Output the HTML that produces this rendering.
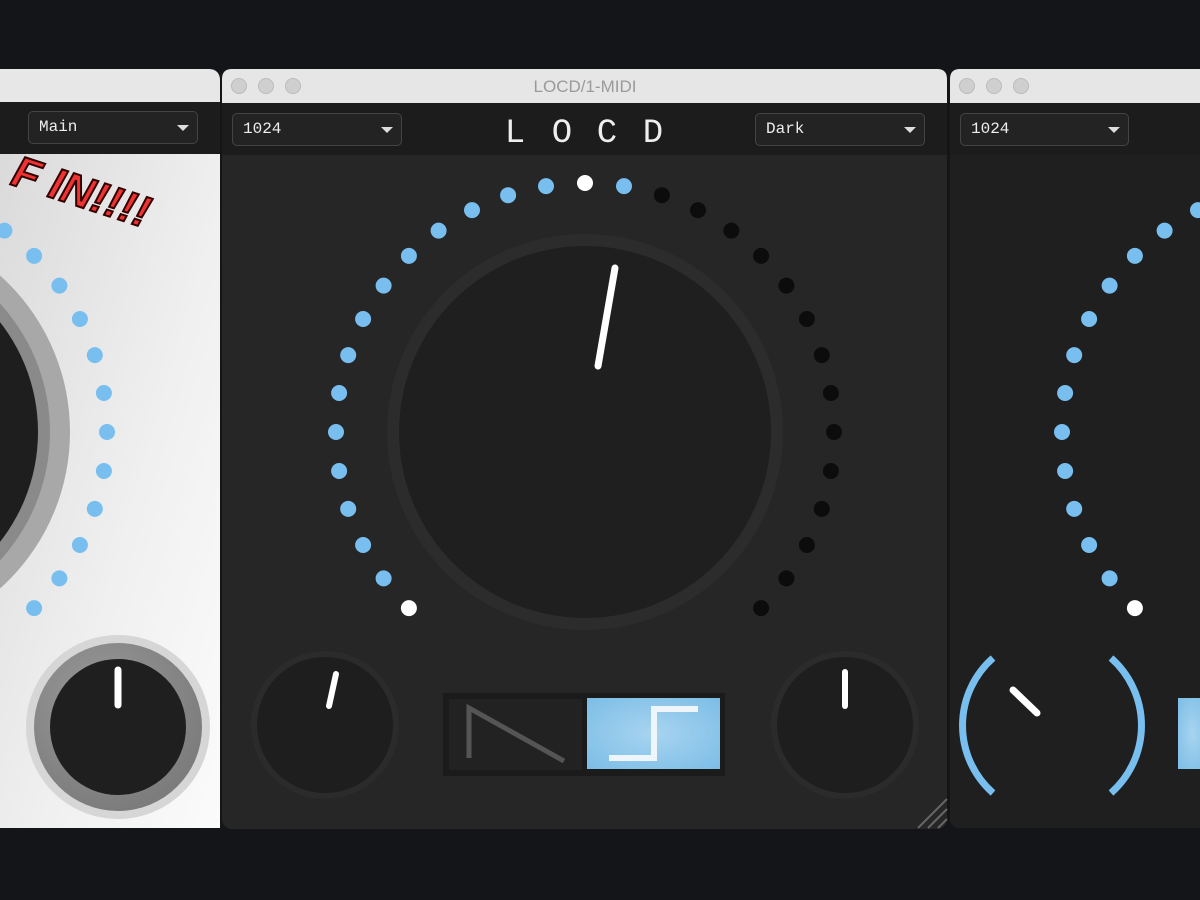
<!DOCTYPE html><html><head><style>
body{margin:0;width:1200px;height:900px;overflow:hidden;background:#141518;font-family:"Liberation Mono",monospace}
.dd{position:absolute;height:33px;border:1px solid #444;border-radius:5px;background:#232323;color:#eee;font-size:16px;line-height:31px;padding-left:10px;box-sizing:border-box}
.dd:after{content:"";position:absolute;right:8px;top:13px;border:6px solid transparent;border-top:6px solid #ddd;border-bottom:0}
</style></head><body>
<svg width="1200" height="900" style="position:absolute;left:0;top:0">
<defs>
<linearGradient id="lg" x1="0" y1="0" x2="1" y2="1"><stop offset="0" stop-color="#d8d8d8"/><stop offset=".6" stop-color="#f0f0f0"/><stop offset="1" stop-color="#fbfbfb"/></linearGradient>
<radialGradient id="bl" cx=".5" cy=".5" r=".7"><stop offset="0" stop-color="#a8d4f0"/><stop offset="1" stop-color="#7cbde6"/></radialGradient>
<radialGradient id="kr" cx=".4" cy=".35" r=".7"><stop offset="0" stop-color="#9a9a9a"/><stop offset="1" stop-color="#7a7a7a"/></radialGradient>
</defs>
<!-- left window -->
<path d="M0 69 H208 Q220 69 220 81 V828 H0Z" fill="url(#lg)"/>
<path d="M0 69 H208 Q220 69 220 81 V102 H0Z" fill="#e7e7e7"/>
<rect x="0" y="102" width="220" height="52" fill="#1c1c1c"/>
<circle cx="-140" cy="432" r="210" fill="#a8a8a8"/>
<circle cx="-140" cy="432" r="190" fill="#8a8a8a"/>
<circle cx="-140" cy="432" r="178" fill="#1e1e1e"/>
<circle cx="118" cy="727" r="92" fill="#d6d6d6"/>
<circle cx="118" cy="727" r="84" fill="url(#kr)"/>
<circle cx="118" cy="727" r="68" fill="#1f1f1f"/>
<line x1="118" y1="705" x2="118" y2="670" stroke="#fff" stroke-width="7" stroke-linecap="round"/>
<text x="10" y="200" transform="rotate(18 60 190)" font-family="Liberation Sans" font-weight="bold" font-style="italic" font-size="44" fill="#e33" stroke="#300" stroke-width="2">F IN!!!!</text>
<!-- center window -->
<rect x="222" y="69" width="725" height="760" rx="10" fill="#262626"/>
<path d="M222 103 V79 Q222 69 232 69 H937 Q947 69 947 79 V103Z" fill="#e6e6e6"/>
<rect x="222" y="103" width="725" height="52" fill="#1c1c1c"/>
<circle cx="239" cy="86" r="7.5" fill="#cfcfcf" stroke="#bbb"/><circle cx="266" cy="86" r="7.5" fill="#cfcfcf" stroke="#bbb"/><circle cx="293" cy="86" r="7.5" fill="#cfcfcf" stroke="#bbb"/>
<text x="585" y="92" text-anchor="middle" font-family="Liberation Sans" font-size="17" fill="#9a9a9a">LOCD/1-MIDI</text>
<text x="515" y="142" text-anchor="middle" font-size="34" fill="#eee">L</text>
<text x="562" y="142" text-anchor="middle" font-size="34" fill="#eee">O</text>
<text x="607" y="142" text-anchor="middle" font-size="34" fill="#eee">C</text>
<text x="653" y="142" text-anchor="middle" font-size="34" fill="#eee">D</text>
<circle cx="585" cy="432" r="198" fill="#2c2c2c"/>
<circle cx="585" cy="432" r="186" fill="#1f1f1f"/>
<line x1="598" y1="366" x2="615" y2="268" stroke="#fff" stroke-width="7" stroke-linecap="round"/>
<circle cx="325" cy="725" r="74" fill="#2b2b2b"/><circle cx="325" cy="725" r="68" fill="#1e1e1e"/>
<line x1="329" y1="706" x2="336" y2="674" stroke="#fff" stroke-width="6" stroke-linecap="round"/>
<circle cx="845" cy="725" r="74" fill="#2b2b2b"/><circle cx="845" cy="725" r="68" fill="#1e1e1e"/>
<line x1="845" y1="706" x2="845" y2="672" stroke="#fff" stroke-width="6" stroke-linecap="round"/>
<rect x="443" y="693" width="282" height="83" fill="#1b1b1b"/>
<rect x="449" y="699" width="133" height="71" fill="#222"/>
<path d="M469 758 V708 L564 761" stroke="#555" stroke-width="5" fill="none"/>
<rect x="587" y="698" width="133" height="71" fill="url(#bl)"/>
<path d="M609 758 H654 V709 H698" stroke="#eef6fc" stroke-width="6" fill="none"/>
<path d="M918 828 L947 799 M928 828 L947 809 M938 828 L947 819" stroke="#666" stroke-width="2"/>
<!-- right window -->
<path d="M950 79 Q950 69 960 69 H1200 V828 H960 Q950 828 950 818Z" fill="#1f1f1f"/>
<path d="M950 103 V79 Q950 69 960 69 H1200 V103Z" fill="#e6e6e6"/>
<circle cx="967" cy="86" r="7.5" fill="#cfcfcf" stroke="#bbb"/><circle cx="994" cy="86" r="7.5" fill="#cfcfcf" stroke="#bbb"/><circle cx="1021" cy="86" r="7.5" fill="#cfcfcf" stroke="#bbb"/>
<rect x="950" y="103" width="250" height="52" fill="#1c1c1c"/>
<path d="M993 793 A90 90 0 0 1 993 658" stroke="#78bff0" stroke-width="7" fill="none"/>
<path d="M1111 658 A90 90 0 0 1 1111 793" stroke="#78bff0" stroke-width="7" fill="none"/>
<line x1="1013" y1="690" x2="1037" y2="713" stroke="#fff" stroke-width="7" stroke-linecap="round"/>
<rect x="1178" y="698" width="30" height="71" fill="url(#bl)"/>
<g id="dots"></g>
</svg>
<div class="dd" style="left:28px;top:111px;width:170px">Main</div>
<div class="dd" style="left:232px;top:113px;width:170px">1024</div>
<div class="dd" style="left:755px;top:113px;width:170px">Dark</div>
<div class="dd" style="left:960px;top:113px;width:169px">1024</div>
<script>
var g=document.getElementById('dots'),s='';
function ring(cx,cy,r,fn){for(var i=0;i<31;i++){var a=(-135+9*i)*Math.PI/180;var x=cx+r*Math.sin(a),y=cy-r*Math.cos(a);var c=fn(i);if(x<-10||x>1210)continue;if(c)s+='<circle cx="'+x.toFixed(1)+'" cy="'+y.toFixed(1)+'" r="8" fill="'+c+'"/>';}}
ring(585,432,249,function(i){return i==0||i==15?'#fff':(i<=16?'#78bff0':'#0c0c0c')});
ring(-142,432,249,function(i){return i==0?'#fff':'#78bff0'});
ring(1311,432,249,function(i){return i==0?'#fff':'#78bff0'});
g.innerHTML=s;
</script>
</body></html>
